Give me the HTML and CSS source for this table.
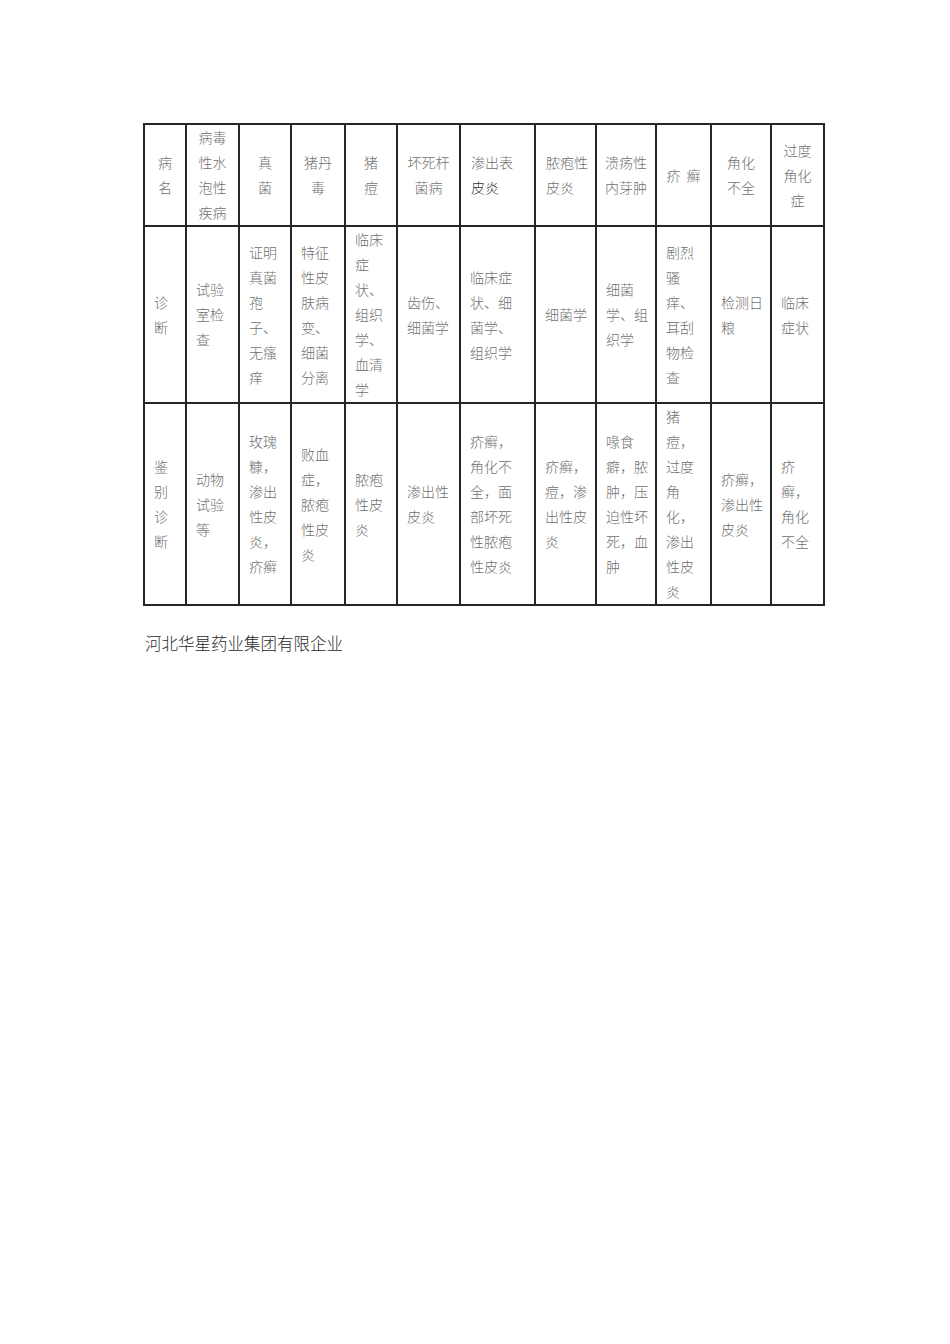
FILE: index.html
```html
<!DOCTYPE html>
<html lang="zh">
<head>
<meta charset="utf-8">
<title>鉴别诊断表</title>
<link rel="stylesheet" href="styles.css">
</head>
<body>
<div class="page">
  <table class="grid">
    <colgroup>
      <col class="c1"><col class="c2"><col class="c3"><col class="c4"><col class="c5"><col class="c6">
      <col class="c7"><col class="c8"><col class="c9"><col class="c10"><col class="c11"><col class="c12">
    </colgroup>
    <tr class="head">
      <td>病<br>名</td>
      <td>病毒<br>性水<br>泡性<br>疾病</td>
      <td>真<br>菌</td>
      <td>猪丹<br>毒</td>
      <td>猪<br>痘</td>
      <td>坏死杆<br>菌病</td>
      <td class="left">渗出表<br><span class="dark">皮炎</span></td>
      <td class="left">脓疱性<br>皮炎</td>
      <td>溃疡性<br>内芽肿</td>
      <td>疥&nbsp;&nbsp;癣</td>
      <td>角化<br>不全</td>
      <td>过度<br>角化<br>症</td>
    </tr>
    <tr>
      <td>诊<br>断</td>
      <td>试验<br>室检<br>查</td>
      <td>证明<br>真菌<br>孢<br>子、<br>无瘙<br>痒</td>
      <td>特征<br>性皮<br>肤病<br>变、<br>细菌<br>分离</td>
      <td>临床<br>症<br>状、<br>组织<br>学、<br>血清<br>学</td>
      <td>齿伤、<br>细菌学</td>
      <td>临床症<br>状、细<br>菌学、<br>组织学</td>
      <td>细菌学</td>
      <td>细菌<br>学、组<br>织学</td>
      <td>剧烈<br>骚<br>痒、<br>耳刮<br>物检<br>查</td>
      <td>检测日<br>粮</td>
      <td>临床<br>症状</td>
    </tr>
    <tr>
      <td>鉴<br>别<br>诊<br>断</td>
      <td>动物<br>试验<br>等</td>
      <td>玫瑰<br>糠，<br>渗出<br>性皮<br>炎，<br>疥癣</td>
      <td>败血<br>症，<br>脓疱<br>性皮<br>炎</td>
      <td>脓疱<br>性皮<br>炎</td>
      <td>渗出性<br>皮炎</td>
      <td>疥癣，<br>角化不<br>全，面<br>部坏死<br>性脓疱<br>性皮炎</td>
      <td>疥癣，<br>痘，渗<br>出性皮<br>炎</td>
      <td>喙食<br>癖，脓<br>肿，压<br>迫性坏<br>死，血<br>肿</td>
      <td>猪<br>痘，<br>过度<br>角<br>化，<br>渗出<br>性皮<br>炎</td>
      <td>疥癣，<br>渗出性<br>皮炎</td>
      <td>疥<br>癣，<br>角化<br>不全</td>
    </tr>
  </table>
  <p class="footer">河北华星药业集团有限企业</p>
</div>
</body>
</html>
```

FILE: styles.css
```css
html, body {
  margin: 0;
  padding: 0;
  background: #fff;
}

.page {
  padding: 123px 0 0 143px;
  font-family: "Noto Sans CJK SC", "Noto Sans", sans-serif;
}

.grid {
  border-collapse: collapse;
  table-layout: fixed;
  width: 682px;
}

.grid td {
  border: 2px solid #262626;
  padding: 0 0 0 9px;
  font-size: 14px;
  line-height: 25px;
  color: #707070;
  font-weight: 300;
  vertical-align: middle;
  text-align: left;
  white-space: nowrap;
  overflow: visible;
}

.grid .head td {
  text-align: center;
  padding: 0;
}

.grid .head td.left {
  text-align: left;
  padding-left: 10px;
}

.dark {
  color: #333;
}

.c1 { width: 42px; }
.c2 { width: 53px; }
.c3 { width: 52px; }
.c4 { width: 54px; }
.c5 { width: 52px; }
.c6 { width: 63px; }
.c7 { width: 75px; }
.c8 { width: 61px; }
.c9 { width: 60px; }
.c10 { width: 55px; }
.c11 { width: 60px; }
.c12 { width: 53px; }

.footer {
  margin: 25px 0 0 2px;
  font-size: 16.5px;
  line-height: 24px;
  color: #2a2a2a;
  font-weight: 300;
}
```
